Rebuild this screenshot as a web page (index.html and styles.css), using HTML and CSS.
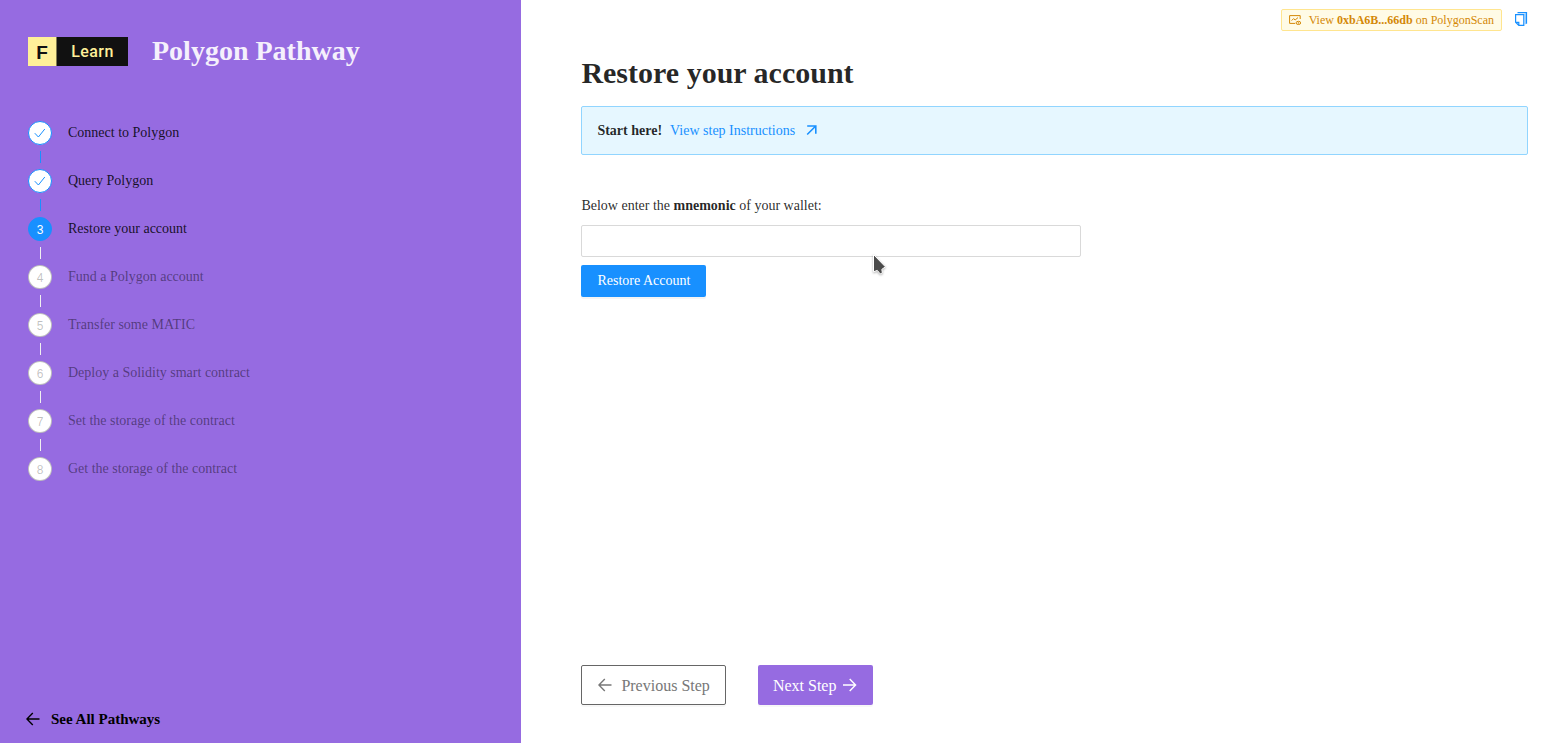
FILE: index.html
```html
<!DOCTYPE html>
<html lang="en">
<head>
<meta charset="utf-8">
<title>Polygon Pathway</title>
<link rel="stylesheet" href="styles.css">
</head>
<body>
<div class="app">
  <aside class="sidebar">
    <header class="brand">
      <div class="logo"><span class="logo-mark">F</span><span class="logo-name">Learn</span></div>
      <div class="brand-title">Polygon Pathway</div>
    </header>
    <ol class="steps">
      <li class="step done"><span class="dot"><svg width="12" height="12" viewBox="0 0 12 12"><path d="M.8 6.2 4.4 10 10.8 2"/></svg></span><span class="label">Connect to Polygon</span></li>
      <li class="step done"><span class="dot"><svg width="12" height="12" viewBox="0 0 12 12"><path d="M.8 6.2 4.4 10 10.8 2"/></svg></span><span class="label">Query Polygon</span></li>
      <li class="step active"><span class="dot">3</span><span class="label">Restore your account</span></li>
      <li class="step"><span class="dot">4</span><span class="label">Fund a Polygon account</span></li>
      <li class="step"><span class="dot">5</span><span class="label">Transfer some MATIC</span></li>
      <li class="step"><span class="dot">6</span><span class="label">Deploy a Solidity smart contract</span></li>
      <li class="step"><span class="dot">7</span><span class="label">Set the storage of the contract</span></li>
      <li class="step"><span class="dot">8</span><span class="label">Get the storage of the contract</span></li>
    </ol>
    <a class="all-pathways"><svg class="arrow" width="14" height="14" viewBox="0 0 14 14"><path d="M13.5 7H1M6.8 1 .9 7l5.9 6"/></svg><span>See All Pathways</span></a>
  </aside>
  <main class="main">
    <div class="toolbar">
      <div class="tag">
        <svg width="12" height="12" viewBox="0 0 12 12"><path d="M11.2 5V1.6H.6v7.8h5.6M2.6 6.6l2-2 1.5 1.4L9 3.6"/><ellipse cx="9.4" cy="8.9" rx="2.3" ry="1.6"/><circle cx="9.4" cy="8.9" r=".4"/></svg>
        <span>View <b>0xbA6B...66db</b> on PolygonScan</span>
      </div>
      <svg class="copy" width="14" height="14" viewBox="0 0 14 14"><path d="M3.5 .6h9v11.2"/><path class="copy-edge" d="M11.4 1.2v11"/><path d="M1.6 2.6h8.2v10.8H4.8L1.6 10.3zM1.6 10.3h3.2v3.1"/></svg>
    </div>
    <h1>Restore your account</h1>
    <div class="alert"><b>Start here!</b><a>View step Instructions</a><svg width="12" height="12" viewBox="0 0 12 12"><path d="M1.2 1h8.6v7.8M9.5 1.3 1.2 9.5"/></svg></div>
    <form class="restore">
      <label for="mnemonic">Below enter the <b>mnemonic</b> of your wallet:</label>
      <input id="mnemonic" type="text">
      <button type="button">Restore Account</button>
    </form>
    <nav class="pager">
      <a class="prev"><svg class="arrow" width="14" height="14" viewBox="0 0 14 14"><path d="M13.5 7H1M6.8 1 .9 7l5.9 6"/></svg><span>Previous Step</span></a>
      <a class="next"><span>Next Step</span><svg class="arrow" width="14" height="14" viewBox="0 0 14 14"><path d="M0 7h12.5M6.7 1l5.9 6-5.9 6"/></svg></a>
    </nav>
  </main>
  <svg class="cursor" width="16" height="24" viewBox="0 0 16 24"><path d="M1.5 .5v17.3l3.8-1.4 2.9 3.5 2.2-1-.6-3.5 3.6-2.6z"/></svg>
</div>
</body>
</html>
```

FILE: styles.css
```css
* { box-sizing: border-box; }
body {
  margin: 0;
  font: 14px/22px "Liberation Serif", serif;
  color: rgba(0, 0, 0, .85);
  background: #fff;
}
svg { display: block; flex: none; fill: none; stroke: currentColor; }
.app { display: flex; height: 743px; overflow: hidden; position: relative; }

.sidebar {
  width: 521px;
  flex: none;
  display: flex;
  flex-direction: column;
  background: #966be1;
  padding: 29px 26px 13px 28px;
}
.brand { display: flex; align-items: center; gap: 24px; height: 44px; }
.logo {
  display: flex;
  width: 100px;
  height: 29px;
  font-family: Roboto, "Liberation Sans", sans-serif;
  font-weight: 500;
  line-height: 29px;
  text-align: center;
}
.logo-mark { width: 29px; background: #fff099; color: #111; font-size: 19px; border-right: 1px solid #807a50; line-height: 31px; font-family: "Liberation Sans", sans-serif; font-weight: bold; }
.logo-name { flex: 1; background: #111; color: #fff099; font-size: 16px; letter-spacing: .4px; }
.brand-title { font-size: 28px; line-height: 44px; font-weight: bold; color: #f5f0fc; }

.steps { list-style: none; margin: 48px 0 0; padding: 0; }
.step { height: 48px; display: flex; gap: 16px; position: relative; color: rgba(0, 0, 0, .45); }
.step.done, .step.active { color: rgba(0, 0, 0, .85); }
.dot {
  width: 24px;
  height: 24px;
  border: 1px solid rgba(0, 0, 0, .25);
  border-radius: 50%;
  background: #fff;
  color: rgba(0, 0, 0, .25);
  display: flex;
  align-items: center;
  justify-content: center;
  font: 12px/24px "Liberation Sans", sans-serif;
  padding-top: 1px;
}
.done .dot { color: #1890ff; border-color: #1890ff; padding: 0; }
.active .dot { color: #fff; background: #1890ff; border-color: #1890ff; }
.step:not(:last-child)::after {
  content: "";
  position: absolute;
  left: 12px;
  top: 30px;
  width: 1px;
  height: 12px;
  background: #f0f0f0;
}
.step.done::after { background: #1890ff; }
.label { line-height: 24px; }
.all-pathways {
  margin: auto 0 0 -2px;
  display: flex;
  align-items: center;
  gap: 11px;
  font-size: 15px;
  font-weight: bold;
  color: #000;
}
.arrow { stroke-width: 1.4; }

.main { flex: 1; padding: 9px 38px 38px 60.4px; display: flex; flex-direction: column; }
.toolbar { display: flex; justify-content: flex-end; align-items: center; gap: 12px; height: 22px; }
.tag {
  display: flex;
  align-items: center;
  gap: 8px;
  height: 22px;
  padding: 0 7px;
  font-size: 12px;
  line-height: 20px;
  color: #d48806;
  background: #fffbe6;
  border: 1px solid #ffe58f;
  border-radius: 2px;
}
.copy { color: #1890ff; margin-top: -3px; stroke-width: 1.2; }
.copy-edge { stroke: #91caff; }
h1 { margin: 24px 0 15px; font-size: 30px; line-height: 36px; font-weight: bold; }
.alert {
  height: 49px;
  display: flex;
  align-items: center;
  padding: 0 15px;
  background: #e6f7ff;
  border: 1px solid #91d5ff;
  border-radius: 2px;
}
.alert a { color: #1890ff; margin: 0 11px 0 8px; }
.alert svg { color: #1890ff; stroke-width: 1.6; }
.restore { margin-top: 40px; display: flex; flex-direction: column; align-items: flex-start; }
.restore input { width: 500px; height: 32px; margin: 8px 0; border: 1px solid #d9d9d9; border-radius: 2px; }
.restore button {
  height: 32px;
  width: 125px;
  padding: 0;
  font: 14px "Liberation Serif", serif;
  color: #fff;
  background: #1890ff;
  border: 0;
  border-radius: 2px;
  box-shadow: 0 2px 0 rgba(0, 0, 0, .045);
}
.pager { margin-top: auto; display: flex; gap: 32px; font-size: 16px; }
.pager a { height: 40px; display: flex; align-items: center; border-radius: 2px; box-shadow: 0 2px 0 rgba(0, 0, 0, .03); }
.prev { width: 145px; gap: 9px; padding: 0 16px; border: 1px solid #666; color: #777; }
.next { width: 115px; gap: 6.5px; padding: 0 14.5px; background: #966be1; color: #fff; }
.pager span { white-space: nowrap; line-height: 24px; padding-top: 1px; }
.cursor { position: absolute; left: 872px; top: 254px; fill: #4a4a4a; stroke: #fff; filter: drop-shadow(0 1px 1px rgba(0, 0, 0, .3)); }
```
